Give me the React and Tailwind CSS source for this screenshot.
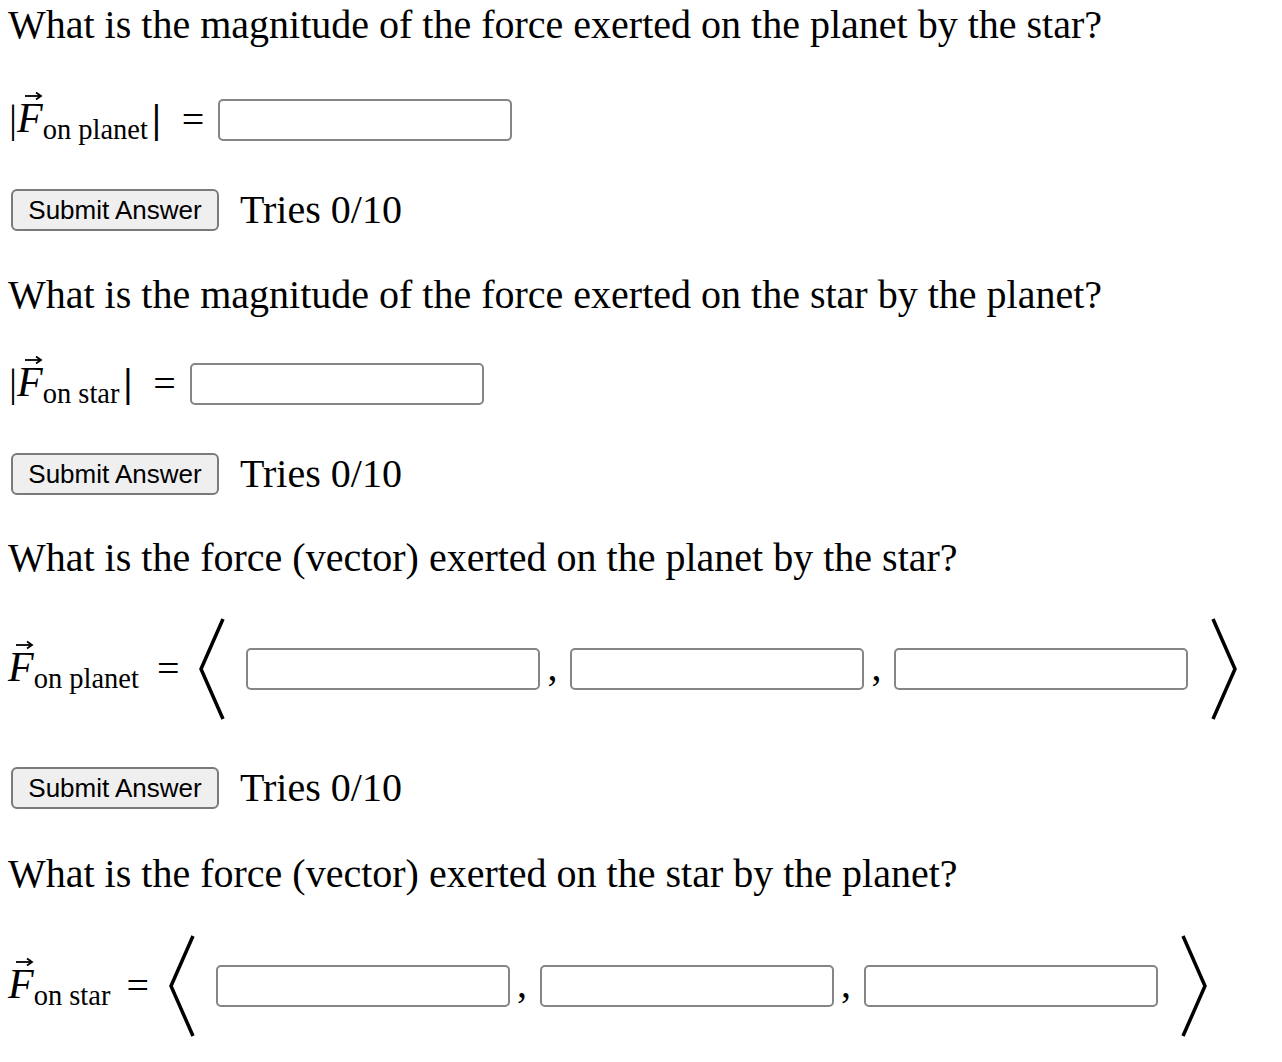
import React from 'react';

const VecF = () => (
  <span className="relative inline-block text-[42px] italic leading-[46px]">
    F
    <svg className="absolute left-[7px] top-[-4px]" width="19" height="10" viewBox="0 0 19 10">
      <path d="M1 5H16" stroke="black" strokeWidth="1.8" />
      <path d="M12 1.5L17 5L12 8.5" fill="none" stroke="black" strokeWidth="1.8" />
    </svg>
  </span>
);

const Field = ({ className = '' }) => (
  <input className={`h-[42px] w-[294px] rounded-[5px] border-2 border-[#858585] bg-white ${className}`} />
);

const Bracket = ({ right }) => (
  <svg width="28" height="102" viewBox="0 0 28 102">
    <polyline
      points={right ? '3,1 25,51 3,101' : '25,1 3,51 25,101'}
      fill="none"
      stroke="black"
      strokeWidth="3.5"
    />
  </svg>
);

const Heading = ({ children, className = '' }) => (
  <div className={`flex h-[50px] items-center text-[40px] leading-[46px] ${className}`}>{children}</div>
);

const SubmitRow = ({ className = '' }) => (
  <div className={`flex h-[42px] items-center pl-[3px] ${className}`}>
    <button className="h-[42px] w-[208px] rounded-[6px] border-2 border-[#7a7a7a] bg-[#efefef] font-['Liberation_Sans',Arial,sans-serif] text-[26px] leading-none text-black">
      Submit Answer
    </button>
    <span className="ml-[21px] text-[40px] leading-[46px]">Tries 0/10</span>
  </div>
);

const Sub = ({ children }) => (
  <span className="inline-block translate-y-[7px] text-[28.5px] leading-[46px]">{children}</span>
);

const Magnitude = ({ sub, className = '' }) => (
  <div className={`flex h-[50px] items-center text-[40px] leading-[46px] ${className}`}>
    <span className="inline-flex items-baseline">
      <span className="ml-[1px]">|</span>
      <VecF />
      <Sub>{sub}</Sub>
      <span className="ml-[4px] font-bold">|</span>
    </span>
    <span className="ml-[21px]">=</span>
    <Field className="ml-[14px]" />
  </div>
);

const Comma = () => <span className="ml-[7px] -translate-y-[2px] text-[40px] leading-[46px]">,</span>;

const Vector = ({ sub, eqGap, bracketGap, className = '' }) => (
  <div className={`flex h-[102px] items-center text-[40px] leading-[46px] ${className}`}>
    <span className="inline-flex items-baseline">
      <VecF />
      <Sub>{sub}</Sub>
    </span>
    <span className={eqGap}>=</span>
    <span className={`${bracketGap} flex`}><Bracket /></span>
    <Field className="ml-[20px]" />
    <Comma />
    <Field className="ml-[13px]" />
    <Comma />
    <Field className="ml-[13px]" />
    <span className="ml-[22px] flex"><Bracket right /></span>
  </div>
);

export default function App() {
  return (
    <div className="min-h-[1062px] bg-white pl-[8px] font-['Liberation_Serif','Times_New_Roman',serif] text-black">
      <Heading>What is the magnitude of the force exerted on the planet by the star?</Heading>
      <Magnitude sub="on planet" className="mt-[45px]" />
      <SubmitRow className="mt-[44px]" />

      <Heading className="mt-[39px]">What is the magnitude of the force exerted on the star by the planet?</Heading>
      <Magnitude sub="on star" className="mt-[39px]" />
      <SubmitRow className="mt-[44px]" />

      <Heading className="mt-[38px]">What is the force (vector) exerted on the planet by the star?</Heading>
      <Vector sub="on planet" eqGap="ml-[18px]" bracketGap="ml-[19px]" className="mt-[35px]" />
      <SubmitRow className="mt-[47px]" />

      <Heading className="mt-[40px]">What is the force (vector) exerted on the star by the planet?</Heading>
      <Vector sub="on star" eqGap="ml-[16px]" bracketGap="ml-[19px]" className="mt-[36px]" />
    </div>
  );
}
